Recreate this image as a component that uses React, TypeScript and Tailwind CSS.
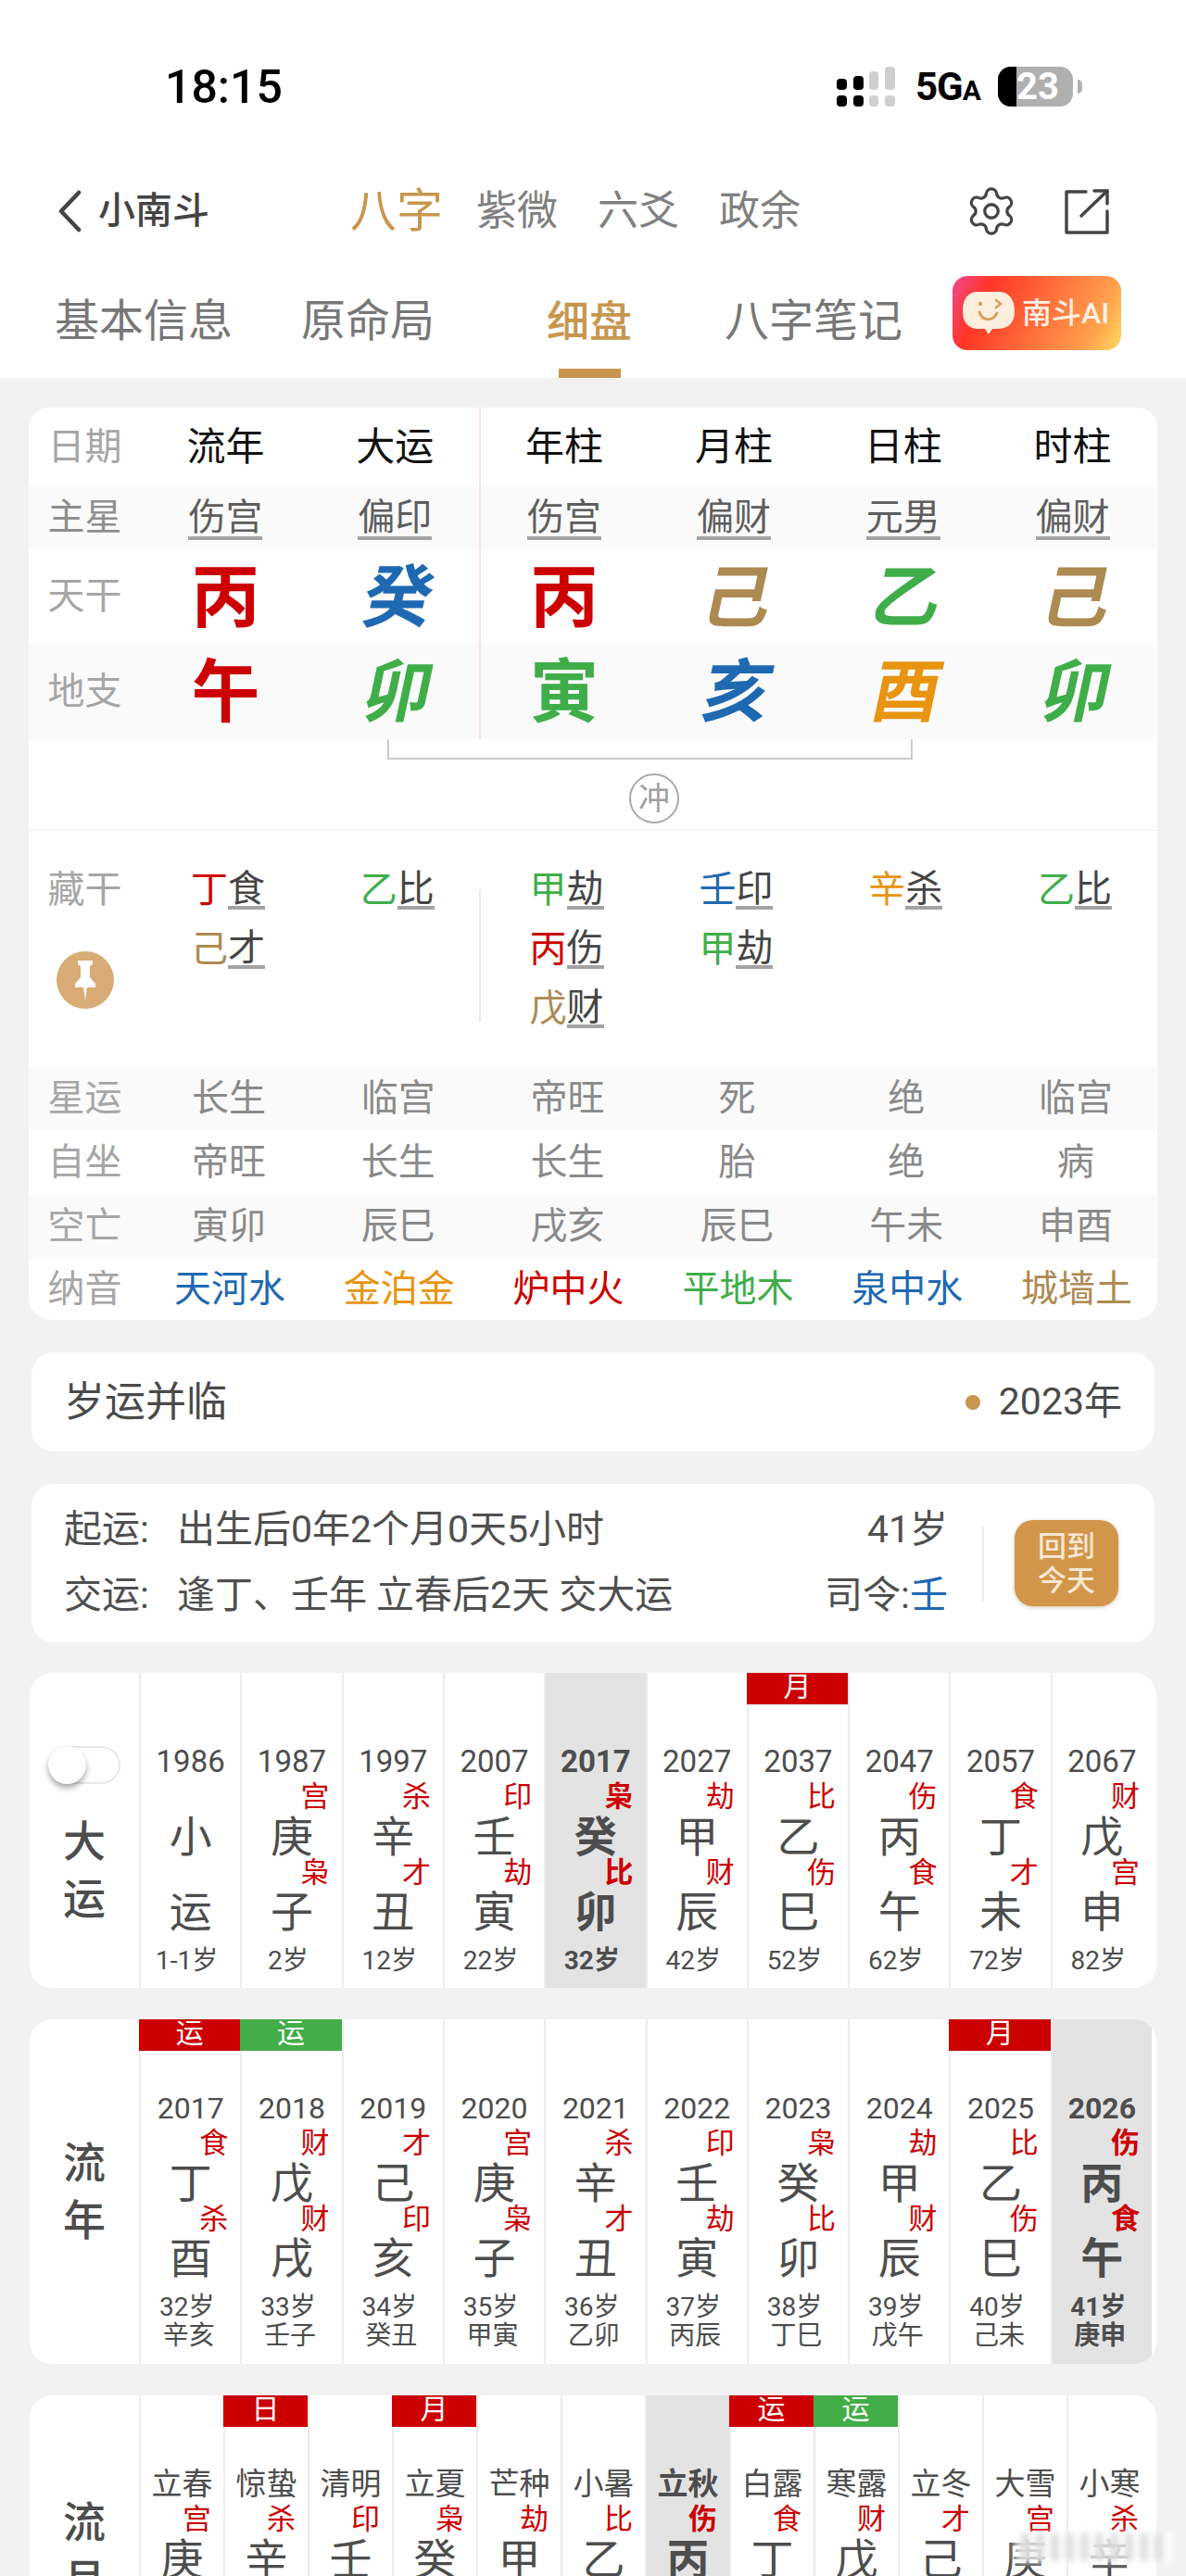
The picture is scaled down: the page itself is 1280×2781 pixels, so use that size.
import { Settings } from 'lucide-react';

const RED = 'text-[#cc0000]';
const BLUE = 'text-[#1f69b3]';
const BROWN = 'text-[#ad8a52]';
const GREEN = 'text-[#3fae49]';
const ORANGE = 'text-[#e8940f]';

const rowGrid = 'grid grid-cols-[121px_repeat(6,1fr)] items-center text-center';

const pillars = [
  { title: '流年', star: '伤宫', gan: '丙', ganColor: RED, zhi: '午', zhiColor: RED },
  { title: '大运', star: '偏印', gan: '癸', ganColor: BLUE, ganItalic: true, zhi: '卯', zhiColor: GREEN, zhiItalic: true },
  { title: '年柱', star: '伤宫', gan: '丙', ganColor: RED, zhi: '寅', zhiColor: GREEN },
  { title: '月柱', star: '偏财', gan: '己', ganColor: BROWN, ganItalic: true, zhi: '亥', zhiColor: BLUE, zhiItalic: true },
  { title: '日柱', star: '元男', gan: '乙', ganColor: GREEN, ganItalic: true, zhi: '酉', zhiColor: ORANGE, zhiItalic: true },
  { title: '时柱', star: '偏财', gan: '己', ganColor: BROWN, ganItalic: true, zhi: '卯', zhiColor: GREEN, zhiItalic: true },
];

const hidden = [
  [['丁', RED, '食'], ['己', BROWN, '才']],
  [['乙', GREEN, '比']],
  [['甲', GREEN, '劫'], ['丙', RED, '伤'], ['戊', BROWN, '财']],
  [['壬', BLUE, '印'], ['甲', GREEN, '劫']],
  [['辛', ORANGE, '杀']],
  [['乙', GREEN, '比']],
];

const plainRows = [
  { label: '星运', cells: ['长生', '临宫', '帝旺', '死', '绝', '临宫'], bg: 'bg-[#fafafa] h-[67px]' },
  { label: '自坐', cells: ['帝旺', '长生', '长生', '胎', '绝', '病'], bg: 'h-[71px]' },
  { label: '空亡', cells: ['寅卯', '辰巳', '戌亥', '辰巳', '午未', '申酉'], bg: 'bg-[#fafafa] h-[68px]' },
];

const nayin = [
  ['天河水', BLUE],
  ['金泊金', ORANGE],
  ['炉中火', RED],
  ['平地木', GREEN],
  ['泉中水', BLUE],
  ['城墙土', BROWN],
];

type Col = {
  top: string;
  god1?: string;
  gan: string;
  god2?: string;
  zhi?: string;
  age?: string;
  gz?: string;
  tag?: string;
  tagGreen?: boolean;
  active?: boolean;
};

const dayun: Col[] = [
  { top: '1986', gan: '小', zhi: '运', age: '1-1岁' },
  { top: '1987', god1: '宫', gan: '庚', god2: '枭', zhi: '子', age: '2岁' },
  { top: '1997', god1: '杀', gan: '辛', god2: '才', zhi: '丑', age: '12岁' },
  { top: '2007', god1: '印', gan: '壬', god2: '劫', zhi: '寅', age: '22岁' },
  { top: '2017', god1: '枭', gan: '癸', god2: '比', zhi: '卯', age: '32岁', active: true },
  { top: '2027', god1: '劫', gan: '甲', god2: '财', zhi: '辰', age: '42岁' },
  { top: '2037', god1: '比', gan: '乙', god2: '伤', zhi: '巳', age: '52岁', tag: '月' },
  { top: '2047', god1: '伤', gan: '丙', god2: '食', zhi: '午', age: '62岁' },
  { top: '2057', god1: '食', gan: '丁', god2: '才', zhi: '未', age: '72岁' },
  { top: '2067', god1: '财', gan: '戊', god2: '宫', zhi: '申', age: '82岁' },
];

const liunian: Col[] = [
  { top: '2017', god1: '食', gan: '丁', god2: '杀', zhi: '酉', age: '32岁', gz: '辛亥', tag: '运' },
  { top: '2018', god1: '财', gan: '戊', god2: '财', zhi: '戌', age: '33岁', gz: '壬子', tag: '运', tagGreen: true },
  { top: '2019', god1: '才', gan: '己', god2: '印', zhi: '亥', age: '34岁', gz: '癸丑' },
  { top: '2020', god1: '宫', gan: '庚', god2: '枭', zhi: '子', age: '35岁', gz: '甲寅' },
  { top: '2021', god1: '杀', gan: '辛', god2: '才', zhi: '丑', age: '36岁', gz: '乙卯' },
  { top: '2022', god1: '印', gan: '壬', god2: '劫', zhi: '寅', age: '37岁', gz: '丙辰' },
  { top: '2023', god1: '枭', gan: '癸', god2: '比', zhi: '卯', age: '38岁', gz: '丁巳' },
  { top: '2024', god1: '劫', gan: '甲', god2: '财', zhi: '辰', age: '39岁', gz: '戊午' },
  { top: '2025', god1: '比', gan: '乙', god2: '伤', zhi: '巳', age: '40岁', gz: '己未', tag: '月' },
  { top: '2026', god1: '伤', gan: '丙', god2: '食', zhi: '午', age: '41岁', gz: '庚申', active: true },
];

const liuyue: Col[] = [
  { top: '立春', god1: '宫', gan: '庚' },
  { top: '惊蛰', god1: '杀', gan: '辛', tag: '日' },
  { top: '清明', god1: '印', gan: '壬' },
  { top: '立夏', god1: '枭', gan: '癸', tag: '月' },
  { top: '芒种', god1: '劫', gan: '甲' },
  { top: '小暑', god1: '比', gan: '乙' },
  { top: '立秋', god1: '伤', gan: '丙', active: true },
  { top: '白露', god1: '食', gan: '丁', tag: '运' },
  { top: '寒露', god1: '财', gan: '戊', tag: '运', tagGreen: true },
  { top: '立冬', god1: '才', gan: '己' },
  { top: '大雪', god1: '宫', gan: '庚' },
  { top: '小寒', god1: '杀', gan: '辛' },
];

function SignalIcon() {
  return (
    <svg width="63" height="43" viewBox="0 0 63 43">
      <rect x="0" y="13" width="11" height="12" rx="4" fill="#000" />
      <rect x="0" y="31" width="11" height="12" rx="4" fill="#000" />
      <rect x="18" y="10" width="11" height="15" rx="4" fill="#000" />
      <rect x="18" y="31" width="11" height="12" rx="4" fill="#000" />
      <rect x="35" y="5" width="10" height="20" rx="4" fill="#cfcfcf" />
      <rect x="35" y="31" width="10" height="12" rx="4" fill="#cfcfcf" />
      <rect x="52" y="0" width="11" height="25" rx="4" fill="#cfcfcf" />
      <rect x="52" y="31" width="11" height="12" rx="4" fill="#cfcfcf" />
    </svg>
  );
}

function ShareIcon() {
  return (
    <svg className="ml-[49px]" width="49" height="50" viewBox="0 0 49 50" fill="none" stroke="#444" strokeWidth="3.4" strokeLinecap="round" strokeLinejoin="round">
      <path d="M24 4H3V48H47V25" />
      <path d="M33 3H47V17" />
      <path d="M47 3L19 30" />
    </svg>
  );
}

function BubbleIcon() {
  return (
    <svg width="58" height="48" viewBox="0 0 58 48">
      <path d="M18 1H40C50 1 57 8 57 22C57 35 50 41 38 41H33L29 47L25 41H18C7 41 1 34 1 22C1 8 7 1 18 1Z" fill="#fbeedd" />
      <path d="M19 23C22 33 34 33 38 24" fill="none" stroke="#d6a25e" strokeWidth="3" strokeLinecap="round" />
      <circle cx="20" cy="14" r="2.2" fill="#d6a25e" />
      <path d="M37 10L42 14L37 18" fill="none" stroke="#d6a25e" strokeWidth="2.6" strokeLinecap="round" />
    </svg>
  );
}

function PinIcon() {
  return (
    <svg width="26" height="46" viewBox="0 0 26 46" fill="#fff">
      <path d="M5 2H21V6L18 8V20L24 27V31H15L13 45L11 31H2V27L8 20V8L5 6Z" />
    </svg>
  );
}

function Column({ col, small }: { col: Col; small?: boolean }) {
  const weight = col.active ? 'font-bold' : '';
  return (
    <div className={`relative flex flex-col items-center border-l-2 border-[#ececec] text-[#4d4d4d] ${col.active ? 'bg-[#e3e3e3]' : ''} ${weight}`}>
      {col.tag && (
        <div className={`absolute left-[-2px] right-0 top-0 flex h-[34px] items-center justify-center overflow-hidden pb-[5px] text-[30px] font-normal leading-none text-white ${col.tagGreen ? 'bg-[#43ad48]' : 'bg-[#cc0000]'}`}>
          {col.tag}
        </div>
      )}
      <div className={`mt-[78px] h-[36px] whitespace-nowrap leading-[36px] ${small ? 'text-[32px]' : 'text-[33px]'}`}>{col.top}</div>
      <div className="h-[40px] w-full pr-[13px] text-right text-[31px] leading-[40px] text-[#cc0000]">{col.god1}</div>
      <div className="h-[46px] text-[46px] leading-[46px]">{col.gan}</div>
      <div className="h-[32px] w-full pr-[13px] text-right text-[31px] leading-[32px] text-[#cc0000]">{col.god2}</div>
      <div className="h-[52px] text-[46px] leading-[52px]">{col.zhi}</div>
      <div className="mt-[10px] h-[34px] pr-2 text-[28px] leading-[34px]">{col.age}</div>
      {col.gz && <div className="-mt-[2px] h-[32px] pr-1 text-[28px] leading-[32px]">{col.gz}</div>}
    </div>
  );
}

function SideLabel({ text }: { text: string }) {
  return (
    <div className="flex flex-col items-center justify-center text-[46px] font-medium leading-[62px] text-[#4d4d4d]">
      <span>{text[0]}</span>
      <span>{text[1]}</span>
    </div>
  );
}

export default function App() {
  return (
    <div className="relative h-[2781px] w-[1280px] overflow-hidden bg-[#f2f2f2] font-['Roboto','Noto_Sans_CJK_SC',sans-serif]">
      <header className="h-[408px] bg-white pt-[72px]">
        <div className="flex h-[43px] items-center pl-[178px]">
          <span className="w-[725px] text-[50px] font-medium leading-none text-black">18:15</span>
          <SignalIcon />
          <span className="ml-[22px] w-[69px] whitespace-nowrap text-[42px] font-bold leading-none tracking-tight text-black">
            5G<span className="text-[30px]">A</span>
          </span>
          <div className="ml-[20px] flex h-[43px] w-[81px] items-center rounded-[14px] bg-[#b0b0b0]">
            <div className="h-full w-[20px] rounded-l-[14px] bg-black" />
            <span className="text-[40px] font-bold leading-none text-white">23</span>
          </div>
          <div className="ml-[5px] h-[15px] w-[5px] rounded-r-full bg-[#b0b0b0]" />
        </div>

        <div className="mt-[83px] flex h-[60px] items-center pl-[62px]">
          <svg width="26" height="46" viewBox="0 0 26 46" fill="none" stroke="#444" strokeWidth="4.5" strokeLinecap="round" strokeLinejoin="round">
            <path d="M23 3L4 23L23 43" />
          </svg>
          <span className="ml-[18px] text-[40px] font-medium text-[#444]">小南斗</span>
          <span className="ml-[152px] text-[50px] text-[#c8964e]">八字</span>
          <span className="ml-[36px] text-[44px] text-[#808080]">紫微</span>
          <span className="ml-[43px] text-[44px] text-[#808080]">六爻</span>
          <span className="ml-[43px] text-[44px] text-[#808080]">政余</span>
          <Settings className="ml-[177px]" size={58} strokeWidth={1.35} color="#444" />
          <ShareIcon />
        </div>

        <div className="mt-[40px] flex pl-[59px]">
          <span className="h-[94px] text-[48px] leading-[98px] text-[#777]">基本信息</span>
          <span className="ml-[74px] h-[94px] text-[48px] leading-[98px] text-[#777]">原命局</span>
          <span className="relative ml-[121px] h-[110px] text-[46px] font-medium leading-[98px] text-[#c8964e]">
            细盘
            <span className="absolute bottom-0 left-[13px] h-[10px] w-[67px] bg-[#c8964e]" />
          </span>
          <span className="ml-[100px] h-[94px] text-[48px] leading-[98px] text-[#777]">八字笔记</span>
          <div className="ml-[54px] flex h-[80px] w-[182px] items-center rounded-[16px] bg-[linear-gradient(115deg,#ee4a8e_0%,#ff3526_20%,#ff6a3a_50%,#ffa04c_82%,#ffd95c_100%)] pl-[10px]">
            <BubbleIcon />
            <span className="ml-[7px] whitespace-nowrap text-[32px] font-medium text-[#fff1e6]">南斗AI</span>
          </div>
        </div>
      </header>

      <section className="mx-[31px] mt-[32px] overflow-hidden rounded-t-[22px] rounded-b-[24px] bg-white">
        <div className="relative">
          <div className="absolute bottom-0 left-[486px] top-0 w-[2px] bg-[#f6e4dc]" />
          <div className={`${rowGrid} h-[85px] text-[42px] text-[#111]`}>
            <span className="text-[40px] text-[#a6a6a6]">日期</span>
            {pillars.map((p) => (
              <span key={p.title}>{p.title}</span>
            ))}
          </div>
          <div className={`${rowGrid} h-[68px] bg-[#fafafa] text-[40px] text-[#5e5e5e]`}>
            <span className="text-[#8f8f8f]">主星</span>
            {pillars.map((p, i) => (
              <span key={i}>
                <span className="inline-block h-[44px] border-b-4 border-[#a3a3a3] leading-[40px]">{p.star}</span>
              </span>
            ))}
          </div>
          <div className={`${rowGrid} h-[102px]`}>
            <span className="text-[40px] text-[#a6a6a6]">天干</span>
            {pillars.map((p, i) => (
              <span key={i} className={`pt-[4px] text-[74px] font-bold leading-none ${p.ganColor}`}>
                <span className={`inline-block ${p.ganItalic ? 'ml-[8px] -skew-x-12' : ''}`}>{p.gan}</span>
              </span>
            ))}
          </div>
          <div className={`${rowGrid} h-[103px] bg-[#fafafa]`}>
            <span className="text-[40px] text-[#a6a6a6]">地支</span>
            {pillars.map((p, i) => (
              <span key={i} className={`pt-[2px] text-[74px] font-bold leading-none ${p.zhiColor}`}>
                <span className={`inline-block ${p.zhiItalic ? 'ml-[8px] -skew-x-12' : ''}`}>{p.zhi}</span>
              </span>
            ))}
          </div>
        </div>

        <div className="h-[99px] border-b border-[#efefef]">
          <div className="ml-[387px] h-[22px] w-[567px] border-x-2 border-b-2 border-[#cccccc]" />
          <div className="ml-[648px] mt-[15px] flex h-[54px] w-[54px] items-center justify-center rounded-full border-2 border-[#a8a8a8] text-[34px] leading-none text-[#a0a0a0]">
            冲
          </div>
        </div>

        <div className="relative grid grid-cols-[121px_repeat(6,1fr)] pb-[31px] pt-[32px] text-center">
          <div className="absolute left-[486px] top-[63px] h-[143px] w-[2px] bg-[#f3e4de]" />
          <div className="flex flex-col items-center">
            <span className="h-[64px] text-[40px] leading-[64px] text-[#a6a6a6]">藏干</span>
            <div className="mt-[34px] flex h-[62px] w-[62px] items-center justify-center rounded-full bg-[#d9ab76]">
              <PinIcon />
            </div>
          </div>
          {hidden.map((items, i) => (
            <div key={i} className="flex h-[192px] flex-col items-center pl-[5px]">
              {items.map(([stem, color, god]) => (
                <div key={stem} className="flex h-[64px] items-center text-[40px] leading-[40px]">
                  <span className={color}>{stem}</span>
                  <span className="h-[42px] border-b-4 border-[#a3a3a3] text-[#454545]">{god}</span>
                </div>
              ))}
            </div>
          ))}
        </div>

        {plainRows.map((row) => (
          <div key={row.label} className={`${rowGrid} ${row.bg} text-[40px] text-[#8a8a8a]`}>
            <span className="text-[#a6a6a6]">{row.label}</span>
            {row.cells.map((c, i) => (
              <span key={i} className="pl-[7px]">{c}</span>
            ))}
          </div>
        ))}
        <div className={`${rowGrid} h-[67px] text-[40px]`}>
          <span className="text-[#a6a6a6]">纳音</span>
          {nayin.map(([name, color], i) => (
            <span key={i} className={`whitespace-nowrap pl-[9px] ${color}`}>{name}</span>
          ))}
        </div>
      </section>

      <section className="mx-[34px] mt-[35px] flex h-[107px] items-center justify-between rounded-[24px] bg-white pl-[35px] pr-[35px] text-[#4a4a4a]">
        <span className="text-[44px]">岁运并临</span>
        <span className="flex items-center text-[41px]">
          <span className="mr-[20px] h-[16px] w-[16px] rounded-full bg-[#c8964e]" />
          2023年
        </span>
      </section>

      <section className="mx-[34px] mt-[35px] flex h-[171px] items-center rounded-[24px] bg-white pl-[35px] pr-[39px] text-[41px] text-[#4f4f4f]">
        <div className="flex flex-1 flex-col gap-[23px]">
          <div className="flex h-[48px] items-center justify-between whitespace-nowrap">
            <span>
              <span className="mr-[30px]">起运:</span>出生后0年2个月0天5小时
            </span>
            <span>41岁</span>
          </div>
          <div className="flex h-[48px] items-center justify-between whitespace-nowrap">
            <span>
              <span className="mr-[30px]">交运:</span>逢丁、壬年 立春后2天 交大运
            </span>
            <span>
              司令:<span className={BLUE}>壬</span>
            </span>
          </div>
        </div>
        <div className="ml-[37px] h-[82px] w-[2px] bg-[#eeeeee]" />
        <div className="ml-[33px] flex h-[93px] w-[112px] flex-col items-center justify-center rounded-[20px] bg-[#d2964b] text-[31px] font-medium leading-[37px] text-[#f8e8d4] shadow-[0_1px_4px_rgba(120,80,30,0.35)]">
          <span>回到</span>
          <span>今天</span>
        </div>
      </section>

      <section className="mx-[32px] mt-[33px] grid h-[340px] grid-cols-[118px_repeat(10,1fr)] overflow-hidden rounded-[24px] bg-white pr-[5px]">
        <div className="flex flex-col items-center pt-[79px]">
          <div className="relative h-[41px] w-[78px] rounded-full border-2 border-[#e8e8e8] bg-white">
            <div className="absolute -left-[2px] -top-[2px] h-[41px] w-[41px] rounded-full bg-white shadow-[0_4px_6px_rgba(0,0,0,0.35)]" />
          </div>
          <div className="mt-[31px]">
            <SideLabel text="大运" />
          </div>
        </div>
        {dayun.map((c, i) => (
          <Column key={i} col={c} />
        ))}
      </section>

      <section className="mx-[32px] mt-[34px] grid h-[372px] grid-cols-[118px_repeat(10,1fr)] overflow-hidden rounded-[24px] bg-white pr-[5px]">
        <SideLabel text="流年" />
        {liunian.map((c, i) => (
          <Column key={i} col={c} small />
        ))}
      </section>

      <section className="mx-[32px] mt-[34px] grid h-[336px] grid-cols-[118px_repeat(12,1fr)] overflow-hidden rounded-[24px] bg-white pr-[6px]">
        <SideLabel text="流月" />
        {liuyue.map((c, i) => (
          <Column key={i} col={c} />
        ))}
      </section>

      <div className="absolute left-[1094px] top-[2733px] flex h-[34px] w-[173px] items-center gap-[7px] bg-white/70 px-2 blur-[3px]">
        {[0, 1, 2, 3, 4, 5, 6, 7, 8, 9].map((n) => (
          <span key={n} className="h-[32px] w-[9px] rounded-full bg-[#dedede]" />
        ))}
      </div>
    </div>
  );
}
